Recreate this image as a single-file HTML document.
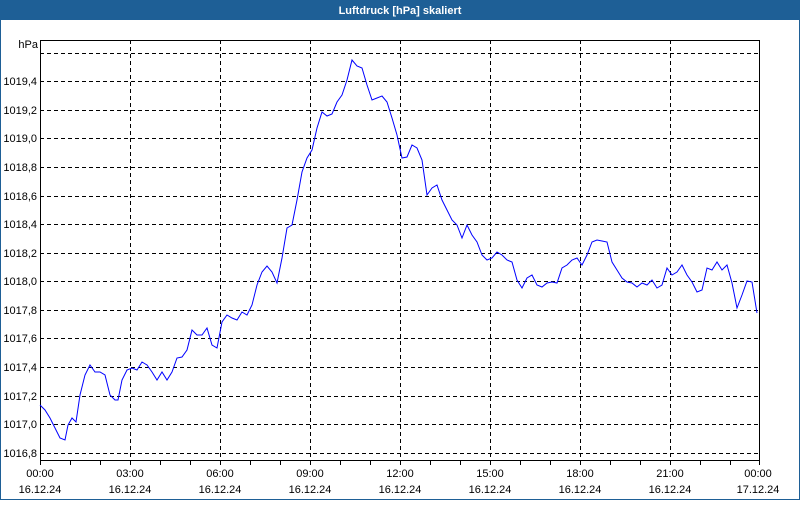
<!DOCTYPE html>
<html><head><meta charset="utf-8"><style>
body{margin:0;width:800px;height:500px;overflow:hidden;background:#fff;font-family:"Liberation Sans",sans-serif}
</style></head><body>
<svg width="800" height="500" xmlns="http://www.w3.org/2000/svg" font-family="Liberation Sans, sans-serif" font-size="11">
<rect x="0" y="0" width="800" height="500" fill="#fff"/>
<rect x="0.5" y="0.5" width="799" height="499" fill="none" stroke="#1e5f96"/>
<rect x="0" y="0" width="800" height="20" fill="#1e5f96"/>
<text x="400" y="14" fill="#fff" font-weight="bold" text-anchor="middle">Luftdruck [hPa] skaliert</text>
<g stroke="#000" stroke-dasharray="4,3" stroke-width="1">
<path d="M40 53.5H760M40 81.5H760M40 110.5H760M40 138.5H760M40 167.5H760M40 196.5H760M40 224.5H760M40 253.5H760M40 281.5H760M40 310.5H760M40 338.5H760M40 367.5H760M40 396.5H760M40 424.5H760M40 453.5H760"/>
<path d="M130.5 40V461M220.5 40V461M310.5 40V461M400.5 40V461M490.5 40V461M580.5 40V461M670.5 40V461"/>
</g>
<rect x="40.5" y="40.5" width="719" height="420" fill="none" stroke="#000"/>
<path stroke="#000" d="M70.5 461V465M100.5 461V465M130.5 461V465M160.5 461V465M190.5 461V465M220.5 461V465M250.5 461V465M280.5 461V465M310.5 461V465M340.5 461V465M370.5 461V465M400.5 461V465M430.5 461V465M460.5 461V465M490.5 461V465M520.5 461V465M550.5 461V465M580.5 461V465M610.5 461V465M640.5 461V465M670.5 461V465M700.5 461V465M730.5 461V465M759.5 461V465M40.5 461V465"/>
<g text-anchor="end" fill="#000">
<text x="38" y="48">hPa</text>
<text x="37" y="85">1019,4</text><text x="37" y="114">1019,2</text><text x="37" y="142">1019,0</text>
<text x="37" y="171">1018,8</text><text x="37" y="200">1018,6</text><text x="37" y="228">1018,4</text>
<text x="37" y="257">1018,2</text><text x="37" y="285">1018,0</text><text x="37" y="314">1017,8</text>
<text x="37" y="342">1017,6</text><text x="37" y="371">1017,4</text><text x="37" y="400">1017,2</text>
<text x="37" y="428">1017,0</text><text x="37" y="457">1016,8</text>
</g>
<g text-anchor="middle" fill="#000">
<text x="40" y="477">00:00</text><text x="40" y="493">16.12.24</text>
<text x="130" y="477">03:00</text><text x="130" y="493">16.12.24</text>
<text x="220" y="477">06:00</text><text x="220" y="493">16.12.24</text>
<text x="310" y="477">09:00</text><text x="310" y="493">16.12.24</text>
<text x="400" y="477">12:00</text><text x="400" y="493">16.12.24</text>
<text x="490" y="477">15:00</text><text x="490" y="493">16.12.24</text>
<text x="580" y="477">18:00</text><text x="580" y="493">16.12.24</text>
<text x="670" y="477">21:00</text><text x="670" y="493">16.12.24</text>
<text x="758" y="477">00:00</text><text x="758" y="493">17.12.24</text>
</g>
<polyline fill="none" stroke="#0000ff" stroke-width="1" points="40,405 45,410 50,418 55,428 60,438 65,440 68,425 72,418 76,422 80,395 85,375 90,365 95,372 100,372 105,375 110,395 115,400 118,400 122,380 127,370 132,368 137,370 142,362 147,365 152,372 157,380 162,372 167,380 172,372 177,358 182,357 187,350 192,330 197,335 202,335 207,328 212,345 217,348 222,322 227,315 232,318 237,320 242,312 247,315 252,305 257,285 262,272 267,266 272,272 277,283 282,258 287,228 292,225 297,200 302,172 307,158 312,150 317,128 322,112 327,116 332,114 337,102 342,95 347,80 352,60 357,66 362,68 367,85 372,100 377,98 382,96 387,102 392,118 397,135 402,158 407,157 412,145 417,148 422,160 427,195 432,188 437,185 442,200 447,210 452,220 457,225 462,238 467,225 472,235 477,242 482,255 487,260 492,258 497,252 502,255 507,260 512,262 517,280 522,288 527,278 532,275 537,285 542,287 547,283 552,282 557,283 562,268 567,265 572,260 577,258 582,265 587,255 592,242 597,240 602,241 607,242 612,262 617,270 622,278 627,282 632,283 637,287 642,283 647,285 652,280 657,288 662,285 667,268 672,275 677,272 682,265 687,275 692,282 697,292 702,290 707,268 712,270 717,262 722,270 727,265 732,283 737,308 742,295 747,281 752,282 757,313"/>
</svg>
</body></html>
